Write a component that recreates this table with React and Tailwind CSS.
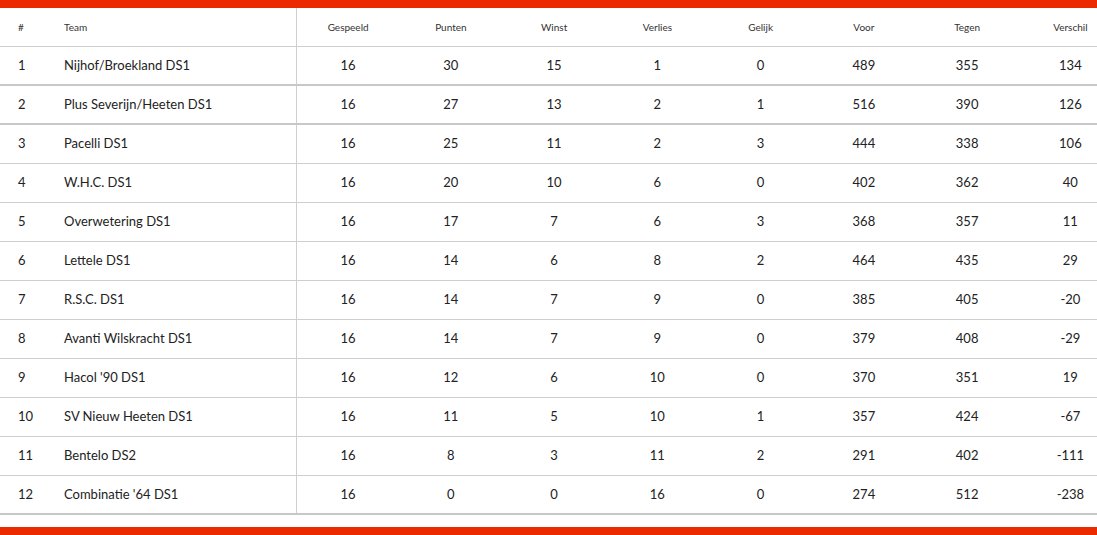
import React from 'react';

const rows = [
    [1, 'Nijhof/Broekland DS1', 16, 30, 15, 1, 0, 489, 355, 134],
    [2, 'Plus Severijn/Heeten DS1', 16, 27, 13, 2, 1, 516, 390, 126],
    [3, 'Pacelli DS1', 16, 25, 11, 2, 3, 444, 338, 106],
    [4, 'W.H.C. DS1', 16, 20, 10, 6, 0, 402, 362, 40],
    [5, 'Overwetering DS1', 16, 17, 7, 6, 3, 368, 357, 11],
    [6, 'Lettele DS1', 16, 14, 6, 8, 2, 464, 435, 29],
    [7, 'R.S.C. DS1', 16, 14, 7, 9, 0, 385, 405, -20],
    [8, 'Avanti Wilskracht DS1', 16, 14, 7, 9, 0, 379, 408, -29],
    [9, "Hacol '90 DS1", 16, 12, 6, 10, 0, 370, 351, 19],
    [10, 'SV Nieuw Heeten DS1', 16, 11, 5, 10, 1, 357, 424, -67],
    [11, 'Bentelo DS2', 16, 8, 3, 11, 2, 291, 402, -111],
    [12, "Combinatie '64 DS1", 16, 0, 0, 16, 0, 274, 512, -238],
];

const headers = ['Gespeeld', 'Punten', 'Winst', 'Verlies', 'Gelijk', 'Voor', 'Tegen', 'Verschil'];

const grid = 'grid grid-cols-[48px_248px_repeat(8,103.25px)] w-[1122px]';

const App = () => {
    return (
        <div className="w-[1097px] h-[535px] bg-white overflow-hidden flex flex-col" style={{ fontFamily: 'Lato, "Noto Sans", sans-serif' }}>
            <div className="h-[8px] bg-[#ec2a00] shrink-0" />

            {/* tabel */}
            <div className="overflow-hidden">
                <div className={`${grid} h-[39px] border-b border-[#cfcfcf] text-[10px] text-[#333] items-center`}>
                    <div className="pl-[18px]">#</div>
                    <div className="pl-[16px]">Team</div>
                    {headers.map((h, i) => (
                        <div key={h} className={`h-full flex items-center justify-center ${i === 0 ? 'border-l border-[#cfcfcf]' : ''}`}>{h}</div>
                    ))}
                </div>

                {rows.map((r, idx) => {
                    const thick = idx < 2 || idx === rows.length - 1;
                    return (
                        <div
                            key={r[0]}
                            className={`${grid} h-[39px] items-center text-[13px] text-[#222] ${thick ? 'border-b-2 border-[#c8c8c8]' : 'border-b border-[#cfcfcf]'}`}
                        >
                            <div className="pl-[18px]">{r[0]}</div>
                            <div className="pl-[16px]">{r[1]}</div>
                            {r.slice(2).map((v, i) => (
                                <div key={i} className={`h-full flex items-center justify-center ${i === 0 ? 'border-l border-[#cfcfcf]' : ''}`}>{v}</div>
                            ))}
                        </div>
                    );
                })}
            </div>

            <div className="flex-1" />
            <div className="h-[8px] bg-[#ec2a00] shrink-0" />
        </div>
    );
};

export default App;
